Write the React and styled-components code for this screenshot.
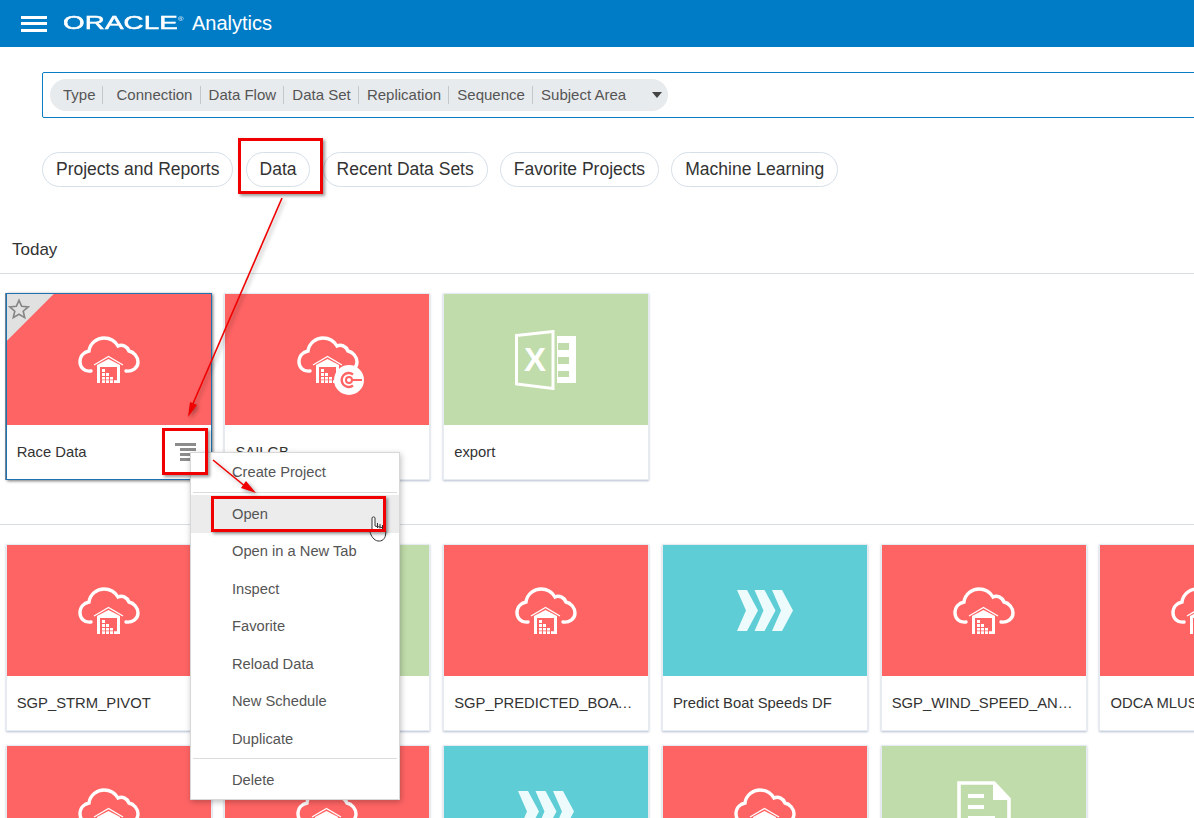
import React from "react";
import styled, { createGlobalStyle } from "styled-components";

const GlobalStyle = createGlobalStyle`
  html, body {
    margin: 0;
    padding: 0;
    background: #fff;
    overflow: hidden;
  }
  * {
    box-sizing: border-box;
  }
`;

const Page = styled.div`
  position: relative;
  width: 1194px;
  height: 818px;
  overflow: hidden;
  background: #fff;
  color: #333;
  font-family: "Liberation Sans", Arial, sans-serif;
`;

const Header = styled.header`
  height: 47px;
  background: #007cc7;
  color: #fff;
  display: flex;
  align-items: center;
  padding-left: 21px;
`;

const Burger = styled.div`
  width: 26px;
  display: flex;
  flex-direction: column;
  gap: 3.5px;
  margin-right: 16px;

  span {
    height: 3px;
    background: #fff;
  }
`;

const LogoBox = styled.div`
  width: 129px;
  height: 47px;
  display: flex;
  align-items: center;
`;

const LogoWord = styled.span`
  display: inline-block;
  font-size: 18.5px;
  line-height: 1;
  margin-bottom: 1px;
  letter-spacing: 0.1px;
  -webkit-text-stroke: 0.5px #fff;
  transform: scaleX(1.5);
  transform-origin: left center;
  white-space: nowrap;

  sup {
    font-size: 5px;
    vertical-align: 8px;
    line-height: 0;
    -webkit-text-stroke: 0;
  }
`;

const ProductName = styled.span`
  font-size: 20px;
  line-height: 1;
  margin-bottom: 2px;
`;

const SearchArea = styled.div`
  padding: 25px 0 0 42px;
  margin-right: -10px;
`;

const SearchBox = styled.div`
  height: 46px;
  border: 1px solid #0a7cc1;
  border-radius: 2px;
  display: flex;
  align-items: center;
  padding-left: 7px;
`;

const FilterPill = styled.div`
  width: 618px;
  height: 32px;
  background: #e8ebee;
  border-radius: 16px;
  display: flex;
  align-items: center;
  padding-left: 5px;
  font-size: 15px;
  color: #555;
`;

const FilterItem = styled.span`
  padding: 0 ${(p) => (p.$lead ? "6px" : "7.2px")} 0 8px;
  line-height: 18px;
  border-right: 1px solid ${(p) => (p.$last ? "transparent" : "#c3c8cc")};
  margin-right: ${(p) => (p.$lead ? "6px" : "0")};
  white-space: nowrap;
`;

const Caret = styled.span`
  width: 0;
  height: 0;
  margin-left: 18px;
  border-left: 5px solid transparent;
  border-right: 5px solid transparent;
  border-top: 6px solid #444;
`;

const Tabs = styled.nav`
  display: flex;
  gap: 12.1px;
  margin: 34px 0 0 42px;
`;

const Tab = styled.div`
  height: 35px;
  padding: 0 13px;
  border: 1px solid #d6dfe8;
  border-radius: 18px;
  display: flex;
  align-items: center;
  font-size: 17.5px;
  color: #333;
  white-space: nowrap;
`;

const SectionTitle = styled.h2`
  margin: 0;
  height: 87px;
  padding: 51px 0 0 12px;
  font-size: 17px;
  line-height: 24px;
  font-weight: normal;
  color: #333;
  border-bottom: 1px solid #d6dfe6;
`;

const CardGrid = styled.div`
  display: grid;
  grid-template-columns: repeat(6, 206px);
  column-gap: 12.75px;
  row-gap: 14px;
  padding-left: 5.7px;
  padding-top: ${(p) => p.$top}px;
`;

const Divider = styled.div`
  height: 1px;
  margin-top: 44px;
  background: #d6dfe6;
`;

const Card = styled.div`
  position: relative;
  height: 187px;
  background: #fff;
  border: 1px solid ${(p) => (p.$selected ? "#1f72b0" : "#e6ebf1")};
  box-shadow: ${(p) =>
    p.$selected
      ? "-1px 0 0 #6f8595, 1px 1px 3px rgba(0,0,0,.55)"
      : "0 1px 2px rgba(110,130,165,.5)"};
`;

const Thumb = styled.div`
  height: 131px;
  background: ${(p) => p.$color};
  display: flex;
  justify-content: center;
  align-items: flex-start;
  padding-top: ${(p) => p.$top}px;
`;

const Corner = styled.div`
  position: absolute;
  left: 0;
  top: 0;
  width: 47px;
  height: 47px;
  background: #e1e1e1;
  clip-path: polygon(0 0, 100% 0, 0 100%);
`;

const StarMark = styled.svg`
  position: absolute;
  left: 1px;
  top: 4px;
  width: 22px;
  height: 22px;
`;

const CardFoot = styled.div`
  height: 54px;
  display: flex;
  align-items: center;
  justify-content: space-between;
  padding: 0 12px 0 10px;
  font-size: 14.8px;
  color: #333;
`;

const CardTitle = styled.span`
  flex: 1;
  min-width: 0;
  white-space: nowrap;
  overflow: hidden;
  text-overflow: ellipsis;
`;

const MenuButton = styled.div`
  width: 21px;
  margin-right: 3px;
  display: flex;
  flex-direction: column;
  align-items: flex-end;
  gap: 2px;

  span {
    width: 16px;
    height: 3px;
    background: #8c8c8c;
  }
  span:first-child {
    width: 21px;
  }
`;

const ContextMenu = styled.ul`
  position: absolute;
  left: 190px;
  top: 452px;
  width: 210px;
  height: 348px;
  margin: 0;
  padding: 0;
  list-style: none;
  background: #fff;
  border: 1px solid #d8d8d8;
  box-shadow: 1px 2px 6px rgba(0, 0, 0, 0.25);
  font-size: 14.7px;
  color: #555;
`;

const MenuItem = styled.li`
  height: 37.5px;
  display: flex;
  align-items: center;
  padding-left: 41px;
  background: ${(p) => (p.$active ? "#ececec" : "transparent")};
`;

const MenuSeparator = styled.li`
  height: 1px;
  margin: ${(p) => p.$space} 2px 2px;
  background: #dcdcdc;
`;

const RedBox = styled.div`
  position: absolute;
  left: ${(p) => p.$x}px;
  top: ${(p) => p.$y}px;
  width: ${(p) => p.$w}px;
  height: ${(p) => p.$h}px;
  border: 3px solid #f00000;
  box-shadow: 2px 2px 3px rgba(0, 0, 0, 0.4);
`;

const Annotations = styled.svg`
  position: absolute;
  left: 0;
  top: 0;
  width: 1194px;
  height: 818px;
  pointer-events: none;
  filter: drop-shadow(2px 2px 2px rgba(0, 0, 0, 0.35));
`;

const HandCursor = styled.svg`
  position: absolute;
  left: 368px;
  top: 515px;
  width: 20px;
  height: 28px;
`;

const WHITE = "#fff";
const RED = "#ff6464";
const GREEN = "#c0dcaa";
const TEAL = "#5ecdd6";

const CloudShape = () => (
  <g>
    <path
      d="M13 35C6 36 2 31 2 26C2 20 6 16 11 15C12 7 19 2 26 2C32 2 37 5 40 10C44 8 49 10 51 15C56 16 60 21 60 26C60 32 54 36 48 35"
      fill="none"
      stroke={WHITE}
      strokeWidth="3.4"
      strokeLinecap="round"
    />
    <polyline points="16,29 30.5,20.5 45,29" fill="none" stroke={WHITE} strokeWidth="1.4" />
    <path d="M19 47V29L30.5 23L42 29V47H39V31H22V47Z" fill={WHITE} />
    <path
      d="M24 33h3v3h-3zM24 37h3v3h-3zM28 37h3v3h-3zM24 41h3v2.5h-3zM28 41h3v2.5h-3zM32 41h3v2.5h-3zM24 44.3h3v2.7h-3zM28 44.3h3v2.7h-3zM32 44.3h3v2.7h-3zM36 44.3h3v2.7h-3z"
      fill={WHITE}
    />
  </g>
);

const CloudIcon = () => (
  <svg width="62" height="48" viewBox="0 0 62 48">
    <CloudShape />
  </svg>
);

const ConnectionIcon = () => (
  <svg width="84" height="62" viewBox="-12 0 84 62">
    <CloudShape />
    <circle cx="52" cy="44" r="15" fill={WHITE} />
    <path d="M56 38.5A7 7 0 1 0 56 49.5" fill="none" stroke={RED} strokeWidth="2.4" />
    <circle cx="52" cy="44" r="3" fill="none" stroke={RED} strokeWidth="2" />
    <path d="M55 44H65" stroke={RED} strokeWidth="2" />
  </svg>
);

const ExcelIcon = () => (
  <svg width="62" height="60" viewBox="0 0 62 60">
    <polygon points="1.5,5.5 38,1.5 38,58.5 1.5,54" fill="none" stroke={WHITE} strokeWidth="3" />
    <text
      x="20"
      y="41"
      textAnchor="middle"
      fontFamily="Liberation Sans, Arial, sans-serif"
      fontWeight="bold"
      fontSize="33"
      fill={WHITE}
    >
      X
    </text>
    <path
      d="M42 6H61V53H42ZM43 13V20H54V13ZM43 27V34H54V27ZM43 41V47H54V41Z"
      fill={WHITE}
      fillRule="evenodd"
    />
  </svg>
);

const FlowIcon = () => (
  <svg width="56" height="41" viewBox="0 0 56 41">
    {[0, 17.5, 35].map((x) => (
      <polygon
        key={x}
        transform={`translate(${x} 0)`}
        points="0,0 10,0 21,20.5 10,41 0,41 9,20.5"
        fill="#eefbfc"
      />
    ))}
  </svg>
);

const DocumentIcon = () => (
  <svg width="54" height="64" viewBox="0 0 54 64">
    <path d="M2 2H37L52 18V62H2Z" fill="none" stroke={WHITE} strokeWidth="3.6" />
    <path d="M36 2V19H52Z" fill={WHITE} />
    <path d="M11 13h16v4H11zM11 24h16v4H11zM11 35h27v4H11z" fill={WHITE} />
  </svg>
);

const THUMBS = {
  cloud: { color: RED, top: 42, icon: <CloudIcon /> },
  connection: { color: RED, top: 42, icon: <ConnectionIcon /> },
  excel: { color: GREEN, top: 36, icon: <ExcelIcon /> },
  flow: { color: TEAL, top: 45, icon: <FlowIcon /> },
  doc: { color: GREEN, top: 35, icon: <DocumentIcon /> },
  blank: { color: GREEN, top: 0, icon: null },
};

const todayCards = [
  { kind: "cloud", title: "Race Data", selected: true },
  { kind: "connection", title: "SAILGB" },
  { kind: "excel", title: "export" },
];

const olderCards = [
  { kind: "cloud", title: "SGP_STRM_PIVOT" },
  { kind: "blank", title: "" },
  { kind: "cloud", title: "SGP_PREDICTED_BOAT_SPEEDS" },
  { kind: "flow", title: "Predict Boat Speeds DF" },
  { kind: "cloud", title: "SGP_WIND_SPEED_ANALYSIS" },
  { kind: "cloud", title: "ODCA MLUSER_DATA" },
  { kind: "cloud", title: "" },
  { kind: "cloud", title: "" },
  { kind: "flow", title: "" },
  { kind: "cloud", title: "" },
  { kind: "doc", title: "" },
];

const filters = [
  "Connection",
  "Data Flow",
  "Data Set",
  "Replication",
  "Sequence",
];

const tabs = [
  "Projects and Reports",
  "Data",
  "Recent Data Sets",
  "Favorite Projects",
  "Machine Learning",
];

const menuItems = [
  "Open in a New Tab",
  "Inspect",
  "Favorite",
  "Reload Data",
  "New Schedule",
  "Duplicate",
];

const DataCard = ({ kind, title, selected }) => {
  const thumb = THUMBS[kind];
  return (
    <Card $selected={selected}>
      <Thumb $color={thumb.color} $top={thumb.top}>
        {thumb.icon}
      </Thumb>
      {selected && (
        <>
          <Corner />
          <StarMark viewBox="0 0 24 24">
            <polygon
              points="12,2.5 14.9,9 22,9.7 16.6,14.4 18.2,21.4 12,17.7 5.8,21.4 7.4,14.4 2,9.7 9.1,9"
              fill="none"
              stroke="#868686"
              strokeWidth="1.8"
            />
          </StarMark>
        </>
      )}
      <CardFoot>
        <CardTitle>{title}</CardTitle>
        {selected && (
          <MenuButton>
            <span />
            <span />
            <span />
            <span />
          </MenuButton>
        )}
      </CardFoot>
    </Card>
  );
};

const App = () => {
  return (
    <Page>
      <GlobalStyle />
      <Header>
        <Burger>
          <span />
          <span />
          <span />
        </Burger>
        <LogoBox>
          <LogoWord>
            ORACLE<sup>®</sup>
          </LogoWord>
        </LogoBox>
        <ProductName>Analytics</ProductName>
      </Header>

      <SearchArea>
        <SearchBox>
          <FilterPill>
            <FilterItem $lead>Type</FilterItem>
            {filters.map((f) => (
              <FilterItem key={f}>{f}</FilterItem>
            ))}
            <FilterItem $last>Subject Area</FilterItem>
            <Caret />
          </FilterPill>
        </SearchBox>
      </SearchArea>

      <Tabs>
        {tabs.map((t) => (
          <Tab key={t}>{t}</Tab>
        ))}
      </Tabs>

      <SectionTitle>Today</SectionTitle>
      <CardGrid $top={19}>
        {todayCards.map((c) => (
          <DataCard key={c.title} {...c} />
        ))}
      </CardGrid>

      <Divider />
      <CardGrid $top={19}>
        {olderCards.map((c, i) => (
          <DataCard key={i} {...c} />
        ))}
      </CardGrid>

      <ContextMenu>
        <MenuItem>Create Project</MenuItem>
        <MenuSeparator $space="1.5px" />
        <MenuItem $active>Open</MenuItem>
        {menuItems.map((m) => (
          <MenuItem key={m}>{m}</MenuItem>
        ))}
        <MenuSeparator $space="0.5px" />
        <MenuItem>Delete</MenuItem>
      </ContextMenu>

      <HandCursor viewBox="0 0 20 28">
        <path
          d="M4 3C4 1.5 7 1.5 7 3V11L16 13C18 14 18 17 17.5 20C17 24 14 26.5 10 26C6 25.5 3 21 2 17C1.5 15 3 14 4 15Z"
          fill="#fff"
          stroke="#333"
          strokeWidth="1"
        />
        <path d="M9.5 8V13M12 9V13.5M14.5 10V14" stroke="#333" strokeWidth="1" />
      </HandCursor>

      <RedBox $x={238} $y={138} $w={85} $h={56} />
      <RedBox $x={162} $y={428} $w={46} $h={47} />
      <RedBox $x={211} $y={496} $w={175} $h={36} />

      <Annotations viewBox="0 0 1194 818">
        <path d="M282 198L192 406" stroke="#f00000" strokeWidth="1.6" fill="none" />
        <polygon points="188,417 190,402 197,405" fill="#f00000" />
        <path d="M213 460L246 487" stroke="#f00000" strokeWidth="1.6" fill="none" />
        <polygon points="256,493 241,488 246,481" fill="#f00000" />
      </Annotations>
    </Page>
  );
};

export default App;
